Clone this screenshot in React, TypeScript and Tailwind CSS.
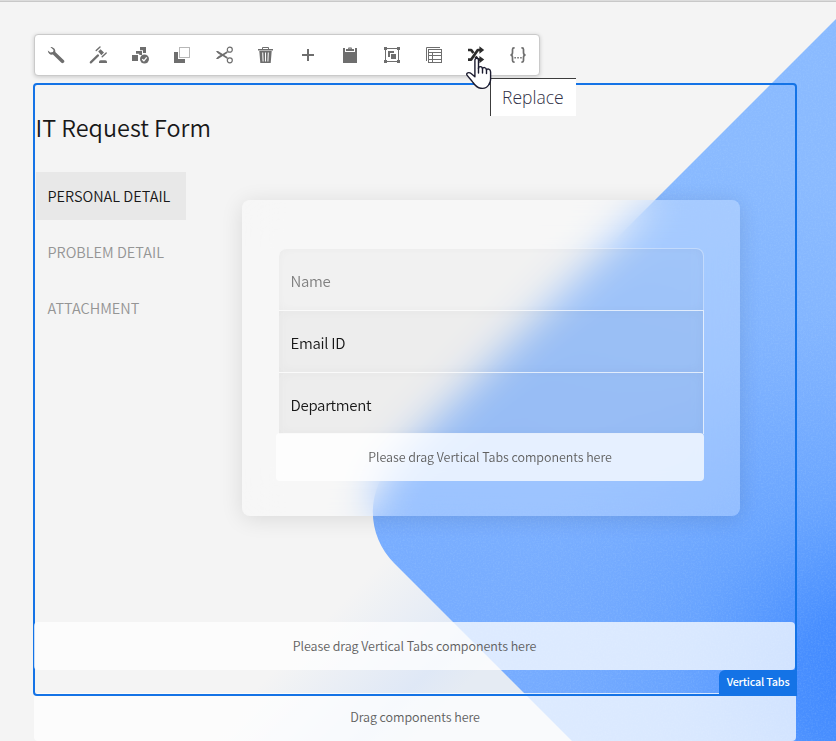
import React from "react";

const SANS = "font-['Noto_Sans_CJK_SC','Noto_Sans',sans-serif]";

function Icon({ children, dark = false }: { children: React.ReactNode; dark?: boolean }) {
  return (
    <button className={`flex h-10 w-[42px] items-center justify-center ${dark ? "text-[#2c2c2c]" : "text-[#6e6e6e]"}`}>
      <svg width="18" height="18" viewBox="0 0 18 18" fill="currentColor" className="block overflow-visible">
        {children}
      </svg>
    </button>
  );
}

function Toolbar() {
  return (
    <div className="relative flex h-[42px] w-[506px] rounded-[4px] border border-[#cacaca] bg-white shadow-[0_1px_4px_rgba(0,0,0,0.18)]">
      <Icon>
        <path d="M3.4 .9 C6.4 .7 8.8 3.2 8.3 6.1 L16.9 14.3 C18.4 15.8 16 18.2 14.4 16.7 L5.9 8.5 C3.4 9.2 1 7.4 .8 4.4 L3.4 6.5 L6 6.1 L6.6 3.9Z" />
      </Icon>
      <Icon>
        <path d="M1.8 16.4 L9 9.4" stroke="currentColor" strokeWidth="2.2" strokeLinecap="round" />
        <path d="M9.2 5.6 L11.6 3.2 L15 6.6 L12.4 9.2Z" />
        <path d="M7.2 4.6 L11 .9 M13.2 10.8 L17.2 6.9" stroke="currentColor" strokeWidth="1.4" strokeLinecap="round" />
        <path d="M10 17 V15.8 Q10 14.2 11.6 14.2 H16.4 Q18 14.2 18 15.8 V17Z" />
      </Icon>
      <Icon>
        <path d="M9 1 H15 V7 H12 V4.3 H9Z M5 5 H11 V9 H8.3 V7.7 H5Z M1 9 H7 V15 H1Z" />
        <circle cx="13.5" cy="13" r="4.5" />
        <path d="M11.2 13.2 L12.9 14.8 L15.7 11.3" fill="none" stroke="#fff" strokeWidth="1.3" />
      </Icon>
      <Icon>
        <path d="M1 6 H5 V13 H12 V17 H1Z" />
        <rect x="6.5" y="1.5" width="10" height="10" fill="#fff" stroke="currentColor" strokeWidth="1" strokeDasharray="1 1" />
      </Icon>
      <Icon>
        <path d="M1 5.1 L3 4.9 L12.8 11.2 L11.9 12.8 L7.6 10 C5 8.8 2.4 7.7 1 5.1Z" />
        <path d="M1 12.9 L3 13.1 L12.8 6.8 L11.9 5.2 L7.6 8 C5 9.2 2.4 10.3 1 12.9Z" />
        <circle cx="14.8" cy="3.7" r="2.5" fill="none" stroke="currentColor" strokeWidth="1.2" />
        <circle cx="14.8" cy="14.3" r="2.5" fill="none" stroke="currentColor" strokeWidth="1.2" />
      </Icon>
      <Icon>
        <path d="M5.5 3 V1.5 H11.5 V3" fill="none" stroke="currentColor" strokeWidth="1" />
        <path fillRule="evenodd" d="M1 3 H16 V4.4 H1Z M2.3 5 H14.7 L13.7 17 H3.3Z M5.2 6.5 L5.6 15.5 H6.6 L6.2 6.5Z M8 6.5 V15.5 H9 V6.5Z M10.8 6.5 L10.4 15.5 H11.4 L11.8 6.5Z" />
      </Icon>
      <Icon>
        <path d="M8 3 H10 V8 H15 V10 H10 V15 H8 V10 H3 V8 H8Z" />
      </Icon>
      <Icon>
        <path d="M2 2 H4 V6 H14 V2 H16 V17 H2Z" />
        <path fillRule="evenodd" d="M5 5 V3 H7 A2 2 0 0 1 11 3 H13 V5Z M8.4 2.6 H9.6 V1.6 H8.4Z" />
      </Icon>
      <Icon>
        <path d="M1 1 H4 V4 H1Z M14 1 H17 V4 H14Z M1 14 H4 V17 H1Z M14 14 H17 V17 H14Z" />
        <rect x="2.5" y="2.5" width="13" height="13" fill="none" stroke="currentColor" />
        <path d="M5 5 H11 V7 H7 V11 H5Z M8 8 H13 V13 H8Z" />
      </Icon>
      <Icon>
        <path d="M1.5 15 V1.5 H15" fill="none" stroke="currentColor" />
        <rect x="3.5" y="3.5" width="13" height="13" fill="none" stroke="currentColor" />
        <path d="M3.5 6.5 H16.5 M3.5 9.5 H16.5 M3.5 13.5 H16.5 M7.5 6.5 V16.5" fill="none" stroke="currentColor" />
      </Icon>
      <Icon dark>
        <path d="M1 4 H4.2 L6.4 7 M8.6 10.4 L10.8 13.6 H13.5 M1 13.6 H4.2 L10.8 4 H13.5" fill="none" stroke="currentColor" strokeWidth="2.7" strokeLinejoin="round" />
        <path d="M12.4 .3 L17.2 4 L12.4 7.7Z M12.4 9.9 L17.2 13.6 L12.4 17.3Z" />
      </Icon>
      <Icon>
        <path d="M5.6 1.8 H5 Q3.5 1.8 3.5 3.4 V6.6 Q3.5 9 1.4 9 Q3.5 9 3.5 11.4 V14.6 Q3.5 16.2 5 16.2 H5.6 M12.4 1.8 H13 Q14.5 1.8 14.5 3.4 V6.6 Q14.5 9 16.6 9 Q14.5 9 14.5 11.4 V14.6 Q14.5 16.2 13 16.2 H12.4" fill="none" stroke="currentColor" strokeWidth="1.7" />
        <path d="M5.4 11 H6.9 V12.5 H5.4Z M8.3 11 H9.8 V12.5 H8.3Z M11.2 11 H12.7 V12.5 H11.2Z" />
      </Icon>

      {/* Tooltip */}
      <div className="absolute left-[455px] top-[43px] z-20 flex h-[38px] w-[86px] items-center border-l border-t border-[#3c3c3c] bg-white pl-[11px] font-['Open_Sans',sans-serif] text-[17.5px] font-light text-[#303046]">
        Replace
      </div>
      {/* Pointer */}
      <svg className="absolute left-[431px] top-[22px] z-30" width="26" height="34" viewBox="0 0 26 34">
        <path
          d="M8.9 19.8 V3.3 C8.9 .6 12.5 .6 12.5 3.3 V11.5 C12.5 8.9 16.3 8.9 16.5 11.8 C16.9 9.8 20.3 10.2 20.5 13 C21.1 11.2 24.6 11.8 24.6 15 V22.5 C24.6 25 23.4 26 22.6 28 C20.8 31 17.3 31.6 14.8 31.2 C10.8 30.8 9 28.5 7 25.5 C5.2 22.6 2.7 20.6 1 18.2 C-.3 15.9 2.9 14.6 5.4 16.8Z"
          fill="#fff" stroke="#1c1c30" strokeWidth="1.4" strokeLinejoin="round"
        />
        <path d="M12.5 11 V16 M16.5 11.5 V16 M20.5 12.5 V16.5" stroke="#1c1c30" strokeWidth="1.4" strokeLinecap="round" />
      </svg>
    </div>
  );
}

function Backdrop() {
  return (
    <svg className="absolute inset-0" width="836" height="741" viewBox="0 0 836 741">
      <defs>
        <linearGradient id="blue" gradientUnits="userSpaceOnUse" x1="700" y1="150" x2="560" y2="640">
          <stop offset="0" stopColor="#8abaff" />
          <stop offset="0.5" stopColor="#7db1ff" />
          <stop offset="1" stopColor="#77acff" />
        </linearGradient>
        <radialGradient id="deep" gradientUnits="userSpaceOnUse" cx="870" cy="680" r="370">
          <stop offset="0" stopColor="#3f88ff" stopOpacity="1" />
          <stop offset="0.2" stopColor="#438bff" stopOpacity="0.9" />
          <stop offset="0.5" stopColor="#5196ff" stopOpacity="0.42" />
          <stop offset="1" stopColor="#6ba4ff" stopOpacity="0" />
        </radialGradient>
        <linearGradient id="tint" gradientUnits="userSpaceOnUse" x1="347" y1="598" x2="450" y2="701">
          <stop offset="0" stopColor="#dfe8f6" stopOpacity="0" />
          <stop offset="0.75" stopColor="#dfe8f6" stopOpacity="1" />
          <stop offset="1" stopColor="#e5ebf3" />
        </linearGradient>
        <filter id="grain" x="0" y="0" width="1" height="1">
          <feTurbulence type="fractalNoise" baseFrequency="0.6" numOctaves="2" seed="4" />
          <feColorMatrix values="0 0 0 0 0.6  0 0 0 0 0.85  0 0 0 0 1  0.9 0 0 0 -0.38" />
          <feComposite in2="SourceGraphic" operator="in" />
        </filter>
      </defs>
      <rect width="836" height="741" fill="#f4f4f4" />
      <path d="M394 541 L594 741 H194Z" fill="url(#tint)" />
      <path d="M836 19 L394 461 A72 72 0 0 0 394 563 L572 741 H836Z" fill="url(#blue)" />
      <path d="M836 19 L394 461 A72 72 0 0 0 394 563 L572 741 H836Z" fill="url(#deep)" />
      <path d="M836 19 L394 461 A72 72 0 0 0 394 563 L572 741 H836Z" filter="url(#grain)" opacity="0.3" />
    </svg>
  );
}

function Field({ label, tone, first = false }: { label: string; tone: string; first?: boolean }) {
  return (
    <div
      className={`flex h-[62px] items-center border-r border-t pl-[11.5px] text-[15px] shadow-[inset_0_0_12px_rgba(0,0,0,0.035)] ${tone} ${
        first ? "rounded-t-lg border-white/35 bg-black/[0.025]" : "border-white/70 bg-black/[0.04]"
      }`}
    >
      <span className="pt-1">{label}</span>
    </div>
  );
}

export default function App() {
  return (
    <div className={`relative h-[741px] w-[836px] overflow-hidden ${SANS}`}>
      <Backdrop />
      <div className="relative flex h-full flex-col">
        <div className="h-[2px] shrink-0 border-b border-[#c8c8c8] bg-[#dcdcdc]" />
        <div className="relative z-20 ml-[34px] mt-8 h-[42px]">
          <Toolbar />
        </div>

        <main className="relative z-10 ml-[33px] mt-[7px] flex h-[613px] w-[764px] shrink-0 flex-col rounded-[4px] border-2 border-[#1473e6]">
          <h1 className="mt-6 h-9 whitespace-nowrap pl-[0.5px] text-[23.4px] font-[350] leading-9 text-[#181818]">IT Request Form</h1>
          <div className="flex">
            <nav className="ml-[1px] mt-[27px] flex w-[150px] flex-col gap-2 text-[14.5px] font-[350]">
              <a className="flex h-12 items-center bg-[#e8e8e8] pl-[11.5px] text-[#181818]">PERSONAL DETAIL</a>
              <a className="flex h-12 items-center pl-[11.5px] text-[#959595]">PROBLEM DETAIL</a>
              <a className="flex h-12 items-center pl-[11.5px] text-[#959595]">ATTACHMENT</a>
            </nav>
            <section className="ml-14 mt-[55px] h-[316px] w-[498px] rounded-lg bg-white/25 pl-[34px] pt-12 shadow-[0_3px_22px_rgba(0,0,0,0.11)] backdrop-blur-[20px]">
              <div className="ml-[3px] w-[425px] font-[350] tracking-[-0.3px]">
                <Field label="Name" tone="text-[#808080]" first />
                <Field label="Email ID" tone="text-[#181818]" />
                <Field label="Department" tone="text-[#181818]" />
              </div>
              <div className="-mt-px flex h-12 w-[428px] items-center justify-center rounded-[4px] bg-white/75 text-[12.5px] font-[350] tracking-[-0.06px] text-[#606060]">
                Please drag Vertical Tabs components here
              </div>
            </section>
          </div>
          <div className="-ml-px mt-[106px] flex h-12 w-[761px] shrink-0 items-center justify-center rounded-[4px] bg-white/75 text-[12.5px] font-[350] tracking-[-0.06px] text-[#606060]">
            Please drag Vertical Tabs components here
          </div>
          <div className="-mr-[2px] flex h-[26px] w-[78px] shrink-0 items-center justify-center self-end rounded-tl-[6px] bg-[#1473e6] pb-1 text-[10.8px] font-medium tracking-[-0.2px] text-white">
            Vertical Tabs
          </div>
        </main>
        <div className="-mt-[3px] ml-[34px] flex h-12 w-[762px] shrink-0 items-center justify-center rounded-[4px] bg-white/75 text-[12.5px] font-[350] tracking-[-0.06px] text-[#606060]">
          Drag components here
        </div>
      </div>
    </div>
  );
}
